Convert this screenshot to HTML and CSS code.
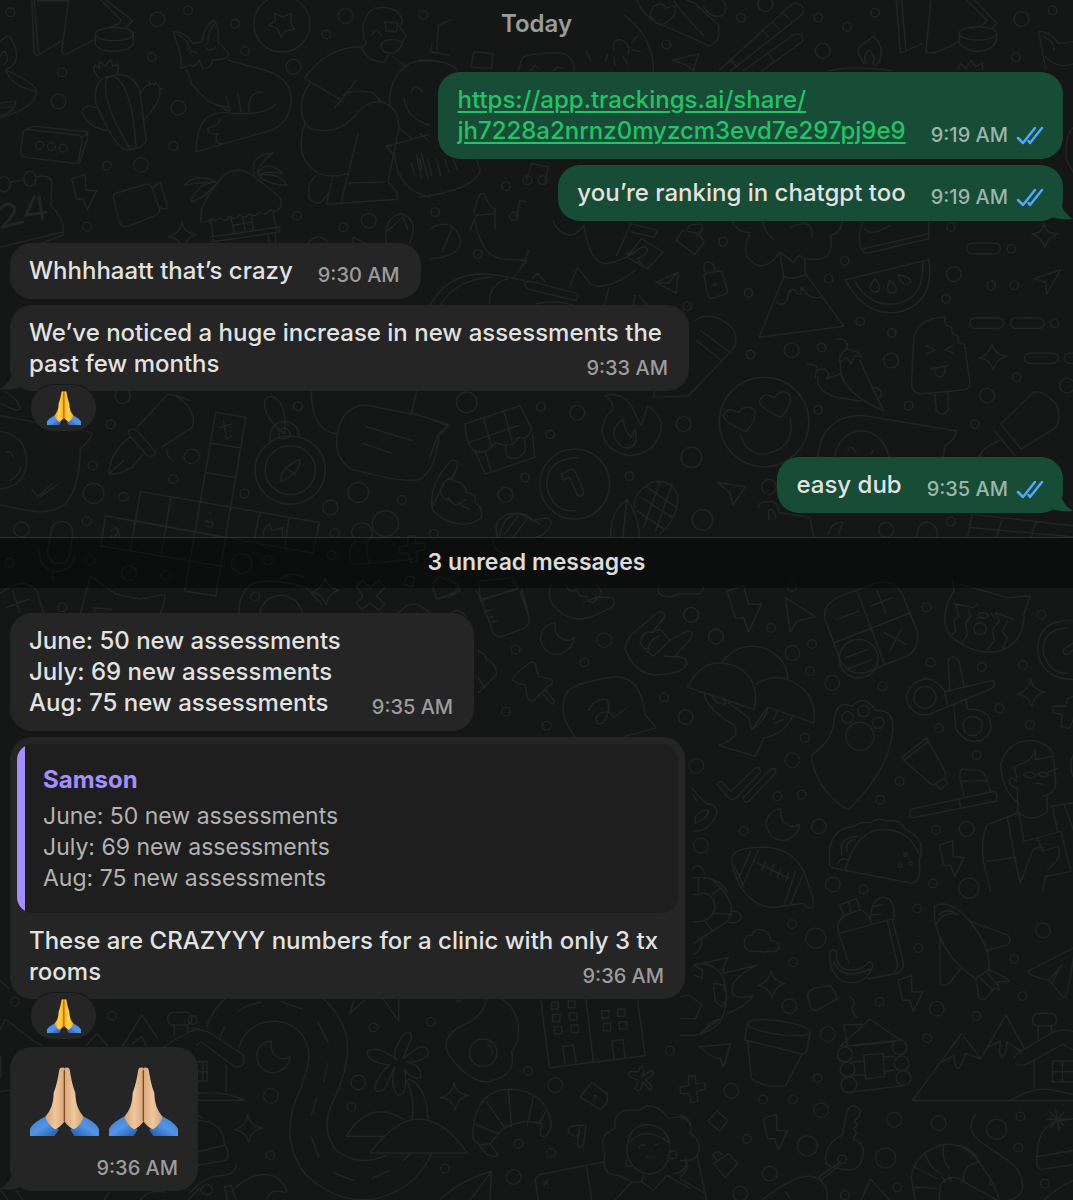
FILE: index.html
```html
<!DOCTYPE html>
<html lang="en">
<head>
<meta charset="utf-8">
<meta name="viewport" content="width=device-width, initial-scale=1">
<title>Chat</title>
<link rel="stylesheet" href="styles.css">
</head>
<body>

<!-- shared icons -->
<svg class="defs" aria-hidden="true">
	<symbol id="ticks" viewBox="0 0 28 20">
		<path d="M2 12L7 17L19 2M12.500 15L14 17L26 2" fill="none" stroke="currentColor" stroke-width="2.500" stroke-linecap="round" stroke-linejoin="round"/>
	</symbol>
	<linearGradient id="cuff" x1="0" y1="0" x2="1" y2="1">
		<stop offset="0" stop-color="#3b7bd0"/><stop offset=".5" stop-color="#5494e6"/><stop offset="1" stop-color="#1d58a8"/>
	</linearGradient>
	<linearGradient id="skin">
		<stop offset="0" stop-color="#d3a077"/><stop offset=".5" stop-color="#efc79d"/><stop offset="1" stop-color="#d9a77b"/>
	</linearGradient>
	<linearGradient id="gold">
		<stop offset="0" stop-color="#f5a623"/><stop offset=".5" stop-color="#ffd54a"/><stop offset="1" stop-color="#f7a91f"/>
	</linearGradient>
	<symbol id="pray" viewBox="0 0 207 207">
		<g id="half">
			<path d="M0 207V186C8 170 30 156 50 148L86 188C80 198 76 203 74 207Z" fill="url(#cuff)"/>
			<path d="M46 149C64 128 70 108 71 78C80 54 84 32 88 8C90 0 103 0 104 6V162C98 172 88 182 76 187C64 182 50 164 46 149Z"/>
			<path d="M104 10V162" fill="none" stroke="#7d4a20" stroke-width="4"/>
		</g>
		<use href="#half" transform="matrix(-1 0 0 1 207 0)"/>
	</symbol>
</svg>

<!-- wallpaper -->
<svg class="wallpaper" viewBox="0 0 1073 1200" preserveAspectRatio="xMidYMin slice" aria-hidden="true">
	<defs>
		<marker id="r1" class="ring" markerUnits="userSpaceOnUse"><circle r="13"/></marker>
		<marker id="r2" class="ring" markerUnits="userSpaceOnUse"><circle r="22"/></marker>
		<marker id="r3" class="ring" markerUnits="userSpaceOnUse"><circle r="30"/></marker>
		<marker id="e1" class="ring" markerUnits="userSpaceOnUse"><ellipse rx="10" ry="13"/></marker>
		<marker id="e2" class="ring" markerUnits="userSpaceOnUse"><ellipse rx="18" ry="22"/></marker>
		<marker id="e3" class="ring" markerUnits="userSpaceOnUse"><ellipse rx="25" ry="31"/></marker>
		<path id="bolt" d="M0 14L40 0L42 48L74 50L46 107L34 74L14 74Z"/>
		<path id="star" d="M40 0Q45 32 82 38Q50 45 43 82Q34 48 0 44Q34 34 40 0Z"/>
		<path id="moon" d="M42 0C4 4-14 40 6 72C30 112 92 96 98 46C72 64 34 44 42 0Z"/>
		<path id="plus" d="M20 0L40 0L42 24L68 20L70 40L44 46L48 74L28 80L22 52L-4 52L-6 34L20 28Z"/>
	</defs>

	<g transform="scale(.3333)">
		<polyline class="s" points="34,37 566,31 707,71 457,171 189,217 737,153 981,103 522,437 323,496 263,679 892,646 1031,681 1270,45"/>
		<polyline class="m" points="474,58 1038,48 882,200 178,304 537,323 425,494 1107,661"/>
		<!-- tent, pot, candle -->
		<path d="M98 0L105 160Q112 170 122 162L188 122M105 0L118 160M208 0L188 152Q190 165 205 160L288 118M115 2H208M305 0L365 60Q360 75 330 82M320 0L400 62L380 82M288 102V132Q300 155 345 153Q400 152 402 125V100"/>
		<ellipse cx="345" cy="102" rx="57" ry="20"/>
		<path d="M0 128Q20 105 32 108Q55 145 52 175Q45 200 20 208M0 175Q15 140 22 165Q30 190 10 195M20 210Q100 245 112 270Q112 325 0 352M20 212Q40 260 110 273M0 310L50 302Q48 340 0 345M0 322L38 320"/>
		<!-- cactus -->
		<path d="M300 235Q275 205 288 195L300 205V185L318 198L335 178L340 198L355 192Q360 215 350 225M375 448Q340 430 290 310Q280 240 330 228Q400 210 422 275L440 420Q430 450 375 448ZM392 445Q320 330 318 260Q318 225 345 228Q400 260 410 440M425 278Q440 245 475 252Q500 290 435 358M290 322Q255 310 248 335Q265 385 332 392M450 240V250M470 245L465 255M490 265L480 268"/>
		<!-- fox -->
		<path d="M545 170L522 95Q560 95 580 130L608 125Q615 75 645 60Q662 90 655 125L688 160L680 175L640 180Q635 205 610 205L600 180Q585 205 570 195L545 205ZM535 105Q565 115 570 148M625 130Q625 95 645 72M570 160Q580 148 592 160M622 145Q630 158 648 142M560 210Q570 220 575 250L590 265Q630 320 690 320M685 180L800 212Q875 235 875 300Q870 365 820 388L590 455Q590 385 620 355Q650 330 700 340Q800 345 828 312M790 275Q740 275 750 338M680 288L692 330M715 280L725 335M660 355Q670 370 625 385Q625 405 655 400Q640 430 670 430M665 320L690 335"/>
		<circle cx="847" cy="72" r="84"/>
		<path d="M825 40L848 50L876 40L873 68L885 88L858 92L845 112L834 85L807 75L828 62Z"/>
		<!-- man on a stool -->
		<path d="M1100 130Q1080 90 1098 55Q1110 20 1150 22Q1200 25 1208 65L1200 80L1220 108L1208 125Q1200 160 1170 160Q1140 155 1145 130Q1170 110 1205 125M1155 65L1195 70L1190 95L1160 92ZM1115 105L1130 88L1145 105M1100 130L1085 145Q1110 190 1155 185L1165 165M1085 140Q980 140 915 235L1025 300L1070 240M930 250Q880 330 930 385Q1020 410 1075 335Q1110 300 1145 305Q1195 320 1198 380L1165 545L1190 575L1195 597L980 612L1000 530M915 370Q880 480 960 520Q1000 535 1045 520M1075 400L1025 605M1045 548L1155 545M950 525Q920 550 930 595Q945 615 965 605L985 580M1025 300L1005 322M1030 285Q1060 265 1120 278L1145 305M1180 170L1220 200M1170 320Q1165 230 1230 190Q1260 178 1290 182M1200 385L1235 415M1213 295Q1220 355 1290 375M1235 275Q1245 245 1268 275"/>
		<!-- voice bubble -->
		<path d="M1160 438L1290 402M1160 438L1185 468Q1195 570 1290 590M1235 490L1245 525M1250 465L1265 530M1265 460L1285 535"/>
		<!-- cassette, calendar, camera, bolt -->
		<path d="M85 388L240 405Q250 410 248 425L238 480Q235 492 220 488L80 472Q62 468 65 450L72 400Q72 388 85 388ZM85 385L105 378L265 395V415L240 490M250 410L265 400"/>
		<circle cx="121" cy="435" r="12"/><circle cx="157" cy="439" r="12"/><circle cx="192" cy="444" r="12"/>
		<path d="M35 545L75 538M110 530Q150 520 158 545L155 615Q200 660 190 705L80 745M5 740L190 695"/>
		<ellipse cx="15" cy="552" rx="18" ry="23"/><ellipse cx="92" cy="535" rx="18" ry="23"/>
		<path class="bold" d="M5 625Q25 600 45 620Q55 635 10 680L70 665M105 590L80 645L140 635M120 590L130 655"/>
		<use href="#bolt" x="218" y="522"/>
		<path d="M342 590Q340 582 352 578L440 552Q452 550 458 560L480 625Q482 640 470 645L385 678Q365 682 360 665ZM460 562L482 545L505 620Q502 632 480 620"/>
		<use href="#star" x="508" y="665"/>
		<!-- beach hut -->
		<path d="M605 665Q595 620 660 540Q690 500 735 512Q770 530 840 590Q850 610 840 625Q825 640 810 628Q800 650 780 635Q765 655 750 640Q735 660 720 642Q705 665 690 648Q680 670 660 652Q650 665 635 655Q625 665 605 665ZM635 660L642 725M820 630L832 690M632 710L840 680V695L635 725M695 655L705 700M730 650L738 695M755 645L762 690M700 675L760 665M650 545Q590 515 555 555Q610 545 650 545Q590 550 575 605Q620 590 645 555M765 525Q745 465 820 458Q770 500 775 520Q800 475 850 520Q800 510 775 525Q840 515 862 555Q810 555 780 530M805 700L808 728M828 700V728M925 728Q960 690 985 728M1060 728V710L1095 728M1160 728Q1150 650 1205 640Q1260 660 1230 728M1165 690L1210 650L1225 690"/>
	</g>

	<g transform="translate(420 0) scale(.4165 .3333)">
		<polyline class="s wide" points="770,53 955,52 1091,38 1024,80 1517,31 591,133 1429,171 207,557 37,635"/>
		<polyline class="m wide" points="828,12 966,152 1442,57"/>
		<!-- bracelet, chopsticks, candle, sun -->
		<path d="M520 0Q530 40 570 70Q620 95 695 138Q725 120 715 75L660 10L640 0M575 75Q540 50 560 20Q580 0 590 25Q620 5 610 45Q600 65 575 75ZM610 5Q650 70 680 105M680 20Q700 60 728 45Q740 20 725 0M718 210L885 20Q900 0 915 18Q925 35 910 50L745 212M745 180L760 200M820 90L835 110M845 65L860 85M870 40L885 55M775 212L895 105Q915 95 918 118Q915 130 905 135L820 212M835 160L848 180"/>
		<path d="M1065 190Q1040 150 1060 135L1088 108Q1110 140 1105 165Q1105 190 1090 195M1070 190Q1060 165 1078 150Q1095 175 1085 190M980 212Q1040 195 1130 212M1142 0L1152 160L1205 130M1155 0L1165 150M1225 0L1213 155Q1230 170 1290 125M1310 0L1360 60Q1350 80 1320 85M1330 0L1383 70L1370 85M1293 105V130Q1310 155 1340 153Q1385 150 1383 100"/>
		<ellipse cx="1338" cy="100" rx="45" ry="20"/>
		<path d="M1290 212L1295 190L1310 205L1322 180L1332 200L1348 190L1350 212M1500 205L1483 95Q1510 90 1530 130L1568 125M1495 110Q1520 120 1520 150M1500 170Q1530 210 1568 190"/>
		<path d="M490 45Q560 110 560 212M465 150Q460 120 480 118Q505 130 500 160M450 165L445 185M465 172L468 195M488 170L498 192M510 150L528 155M508 130L520 110"/>
		<path d="M605 180L668 162L655 212L640 195ZM130 155L175 160L172 205L122 200ZM235 212L245 175Q255 160 330 158Q370 160 370 212M265 212L275 195L285 205M320 212L330 200L345 205M0 180Q70 180 90 212M400 155L410 180M30 130L25 155L70 165M45 75L75 60M45 75L40 150"/>
		<!-- voice bubble, notes, finger -->
		<path d="M0 590Q130 570 145 510L135 475M0 475L5 510M20 478L28 525M40 478L50 525M60 478L70 515M80 478L90 510M255 545L268 490L308 500L300 545M232 650L240 600L255 605M130 640Q140 570 155 580Q165 620 180 625V690M120 690L135 645L180 640"/>
		<ellipse cx="258" cy="540" rx="11" ry="13"/><ellipse cx="295" cy="540" rx="11" ry="13"/><ellipse cx="226" cy="648" rx="10" ry="13"/>
		<path d="M1568 380Q1545 400 1550 480L1568 520M0 400L20 420"/>
	</g>

	<g transform="translate(430 210) scale(.41 .3333)">
		<polyline class="s wide" points="714,94 117,131 776,247 1010,151 971,205 1269,50 1416,115 1367,225 1423,224 1257,265 1048,332 1125,367 1521,338 627,287 781,432 954,411 1166,585 946,597 1429,500 270,588 293,671 232,800 486,796 1327,641 1269,932"/>
		<polyline class="m wide" points="1276,191 881,419 1123,450 359,606 618,640 184,852 826,828 1111,957 1357,555 1552,525"/>
		<polyline class="l wide" points="90,575 637,740 664,927"/>
		<!-- dancer -->
		<path d="M110 32Q125 130 170 145L235 150L205 200M240 120L230 160M300 32Q310 70 345 75Q370 60 375 45Q390 160 430 160Q470 150 500 125L480 130M455 135L490 40L555 60L545 80L490 65M515 85L568 125L530 175L480 140ZM495 130Q520 100 530 115Q530 135 505 145L520 165M500 180Q430 245 390 220L360 170L340 230M435 235L425 285M0 145Q70 140 75 95Q70 50 40 42Q10 40 0 60M55 50L30 125M0 285Q50 170 170 195L230 210M25 285Q60 210 150 200M145 280Q145 220 190 205M232 215Q230 235 245 238L355 270Q365 255 355 248L245 212ZM250 205L262 188L280 212M500 255L495 285M510 255L528 285M260 280Q310 265 350 285"/>
		<!-- bottle, play, padlock -->
		<path d="M615 60L600 90L645 132L668 95L655 70ZM625 60L632 45L660 40L665 55L650 75M605 185L550 215L600 248ZM550 215L580 218L600 190M668 200Q665 190 680 186L710 182L725 240Q725 250 715 253L685 265Q678 262 676 250ZM672 190Q660 155 680 155Q695 160 695 185"/>
		<circle cx="694" cy="222" r="4"/>
		<!-- volcano -->
		<path d="M735 32Q750 70 780 65Q750 140 800 165Q830 170 852 125L862 198L802 380L1008 347L915 190L912 145L900 135L885 155L852 125M915 145Q990 160 975 75Q1000 70 1005 32M810 32Q815 65 835 85M880 50Q935 20 930 80M862 198Q885 210 915 192M845 275Q855 290 870 270Q875 225 890 240Q905 270 905 230Q925 270 950 260"/>
		<!-- slices -->
		<path d="M1055 32Q1035 100 1060 130L1215 85V32M1055 115L1215 70M1060 55Q1075 80 1120 45M1012 208L1215 148Q1230 280 1140 305Q1060 320 1012 208ZM1035 212Q1070 290 1135 280Q1205 265 1200 158"/>
		<path d="M1085 205Q1060 235 1085 245Q1105 240 1085 205ZM1120 210Q1105 250 1130 248Q1145 235 1120 210ZM1140 192Q1145 225 1165 222Q1185 205 1140 192Z"/>
		<!-- sparkles and dashes -->
		<path d="M1495 40Q1500 72 1530 70Q1502 82 1498 112Q1490 82 1466 70Q1492 70 1495 40ZM1368 400Q1373 430 1404 438Q1378 445 1372 478Q1365 445 1338 442Q1365 430 1368 400ZM1472 205L1536 178L1502 250L1500 215Z"/>
		<rect x="1307" y="98" width="82" height="32" rx="15"/><rect x="1315" y="322" width="82" height="32" rx="15"/><rect x="1414" y="322" width="82" height="32" rx="15"/><rect x="1448" y="427" width="82" height="32" rx="15"/><rect x="1545" y="427" width="60" height="32" rx="15"/>
		<!-- ice lolly -->
		<path d="M1173 520L1178 390Q1185 320 1255 320Q1248 345 1270 350Q1270 375 1285 375Q1285 405 1302 400L1315 515Q1315 535 1300 538L1195 550Q1172 545 1173 520ZM1230 552L1233 600Q1248 620 1262 598V545M1208 405L1230 418L1210 430M1272 405L1255 418L1275 428M1220 475L1262 465M1228 475Q1230 500 1245 500Q1255 495 1255 468"/>
		<!-- chillies -->
		<path d="M990 385Q1020 380 1015 415M1015 415Q990 440 1000 455L1015 440L1025 460L1035 435L1052 440Q1045 420 1015 415ZM1000 455Q990 540 1105 600Q1080 540 1048 450M920 462Q945 460 945 480M940 500Q935 475 960 475Q980 490 965 505M945 500Q940 540 990 560L1050 572M965 505L1000 490M1075 530Q1100 530 1100 555L1090 565"/>
		<!-- heart eyes face -->
		<ellipse cx="814" cy="634" rx="109" ry="134"/>
		<path d="M770 662Q715 635 716 615Q725 585 752 605Q770 575 792 600Q795 630 770 662ZM855 620Q800 590 803 570Q815 540 838 562Q860 530 878 555Q880 590 855 620ZM757 675Q770 730 815 730Q890 715 878 625"/>
		<!-- flame -->
		<path d="M485 735Q420 720 420 655Q425 610 445 600Q450 570 425 555Q480 540 500 610L515 645L530 585Q575 625 560 670Q545 730 485 735ZM470 710Q425 665 470 625Q475 660 490 680L500 655Q510 720 470 710Z"/>
		<!-- pencil, gift -->
		<path d="M645 330Q685 295 735 350Q755 385 735 420L630 555L545 560L548 540M650 390L710 450M660 360L730 425M85 640L220 585L248 655Q240 690 215 680Q200 720 160 695Q140 735 110 720Q90 710 85 640ZM95 695L215 645M130 620L150 705M180 600L200 690M110 722L135 790L255 740L250 670M135 722L150 785M185 700Q180 755 215 740Q240 725 230 690M0 625L45 645L20 670L0 740"/>
		<!-- coin -->
		<ellipse cx="353" cy="820" rx="85" ry="105"/>
		<path d="M360 740Q280 745 285 830Q300 905 355 900M320 790L345 775Q355 775 375 845Q370 860 360 855L340 800L325 808Z"/>
		<!-- hand, corn -->
		<path d="M5 890Q0 820 45 760Q55 740 68 755Q65 790 50 805M25 840Q40 790 60 810Q90 820 88 845Q115 845 110 875Q130 890 125 920Q100 950 55 935Q15 920 5 890ZM25 840Q30 870 50 865M45 860Q60 890 70 880L88 865M75 880Q90 895 100 895M440 978Q440 900 480 865Q510 920 510 978M480 865L470 978M500 890Q490 850 540 815Q590 800 605 860Q600 930 560 970M515 860L590 920M530 830L600 890M505 900L570 955M560 815L520 950M590 820L550 960M165 978Q150 930 190 910Q240 900 250 930Q300 910 295 940Q280 978 260 978"/>
		<!-- arrow, ghost bubble, brush, lock -->
		<path d="M700 815L768 828L738 882L730 845ZM945 738Q955 610 1060 615L1280 660Q1285 680 1255 705L1250 738M985 738Q1000 660 1055 660Q1105 670 1118 738M1018 722Q1025 695 1038 725M1075 730L1080 718M1340 738Q1340 715 1385 690M1375 660L1425 735M1390 640L1470 545Q1490 535 1525 580Q1540 620 1525 650L1440 715ZM800 890Q800 870 830 872Q850 875 850 905L925 920L935 978M825 925V900Q835 885 842 920M1185 978Q1190 930 1215 935Q1240 945 1235 978M970 970Q980 930 1005 935L995 970M1310 978L1320 910L1568 945M1380 978L1395 920M1465 978L1475 935M1315 950L1568 978"/>
	</g>

	<g transform="translate(0 380) scale(.3444 .3333)">
		<polyline class="s" points="866,77 323,131 271,255 505,295 711,338 361,348 254,421 1167,357 973,457 1260,459 183,679 742,647 30,545 265,540 482,583 780,538 964,523"/>
		<polyline class="m" points="558,227 65,446 960,380 376,577 358,46"/>
		<polyline class="l" points="274,338 1041,335 1052,456 703,548"/>
		<circle cx="1120" cy="428" r="38"/>
		<!-- ghost bubble -->
		<path d="M0 105L268 155Q275 165 235 205Q235 320 190 370Q150 400 90 390L0 372M0 152Q75 160 80 240Q75 320 0 325M20 215Q35 205 40 230M30 300Q60 285 62 260M95 325L112 347L155 308M120 347L172 310M20 33Q60 60 60 85Q50 95 0 65"/>
		<!-- pen -->
		<path d="M400 140L485 45Q510 30 550 80Q570 110 560 140L470 200M515 45L555 60M375 150Q385 140 400 150L455 215Q450 230 430 225L378 165ZM378 170Q325 210 318 275Q330 290 385 260L418 220M320 278L362 238M485 205Q485 230 505 240"/>
		<!-- crossword -->
		<path d="M628 95L715 110L628 645L538 630ZM410 332L928 425L910 517L395 420M308 405L652 470M295 495L640 555M308 405L295 495M410 332L380 508M498 350L470 525M755 397L738 485M840 412L828 500M612 187L700 202M597 275L683 290"/>
		<path d="M650 120L660 175L675 165M640 140L675 130M612 395V397M598 420L620 425Q620 445 600 435M325 450Q340 430 345 450Q335 480 325 465M345 450L350 470M765 470Q765 435 785 430L790 450L820 440L822 468"/>
		<!-- compass -->
		<circle cx="844" cy="268" r="102"/><circle cx="844" cy="268" r="73"/><circle cx="827" cy="159" r="16"/>
		<path d="M785 185Q780 125 830 122Q870 130 870 170M825 158Q765 110 770 60Q785 35 810 60Q835 90 827 158M872 235Q875 275 818 302Q810 265 872 235ZM830 260L860 282"/>
		<!-- chat bubble -->
		<path d="M1195 97L1300 130Q1305 140 1275 165Q1265 270 1220 295Q1180 310 1020 265Q970 230 980 165Q990 80 1060 72L1195 100M1065 138L1198 180M1053 188L1137 217M905 33Q905 150 980 160M1210 33L1195 100"/>
		<!-- hand, lower left of the gift -->
		<path d="M1432 470Q1430 520 1480 520M1450 470Q1460 400 1510 398L1568 430M1465 460L1505 405M1490 470L1530 415"/>
		<!-- mic, bottle, plaster -->
		<path d="M150 455Q155 420 188 422Q215 430 213 460L205 520Q195 555 160 545Q135 530 142 500ZM115 510Q120 565 165 572Q210 570 222 525M155 575V600M1018 510Q1015 480 1070 475L1160 468M1018 510Q1010 555 1040 550L1200 535M1070 480Q1060 520 1075 545"/>
		<use href="#plus" x="1165" y="465"/>
		<path d="M0 640Q70 580 110 630L130 700M20 680L85 655M40 630L60 695M235 700L250 640L265 585L340 640L410 655L480 640Q485 660 465 700M270 680L325 685M280 680L275 700M695 700Q695 610 760 600Q840 600 890 620L935 670M755 700Q765 645 820 643Q870 650 880 700M820 590Q850 570 885 590"/>
		<use href="#star" x="905" y="590"/>
		<path d="M1035 615L1055 600L1075 620L1100 600L1118 620L1095 645L1118 670L1100 688L1075 665L1052 685L1035 668L1055 645ZM1185 585L1205 590L1198 618L1172 610ZM1275 585L1330 610L1320 640L1268 655L1255 610ZM1155 700Q1200 640 1250 700M1390 600L1490 590L1505 620L1395 660ZM1400 660L1410 700M1515 625L1535 700"/>
	</g>

	<g transform="translate(440 580) scale(.3333)">
		<polyline class="s" points="227,205 433,244 198,391 320,434 672,349"/>
		<polyline class="m" points="492,177 752,101 827,167 736,407"/>
		<path d="M110 30L125 55L235 25L215 0M125 60L160 155Q170 170 190 165L255 140Q270 130 268 110L240 30M135 92L158 85M145 110L160 107M150 125L170 120M30 97Q60 75 80 110M115 210Q135 215 140 235Q170 245 170 280L115 335M115 290L135 320M0 50L60 30L55 10"/>
		<use href="#moon" x="304" y="125"/>
		<path d="M335 10Q310 60 370 100Q415 125 460 105L515 80Q530 60 515 50L470 48L430 65M375 10Q390 40 410 25Q420 55 440 45Q440 65 460 65M470 10L485 35L460 65M655 25Q650 45 690 48L715 40L780 38L790 20"/>
		<!-- pushpin -->
		<path d="M218 295Q215 285 270 245Q285 238 288 258L295 285L335 295Q345 305 325 315L280 360Q265 362 262 345L255 310Q230 310 218 295ZM305 335L335 368Q345 370 342 358L315 325"/>
		<!-- rock hand, bubble -->
		<path d="M555 205Q555 170 600 140L650 95Q675 85 672 110L635 155L660 145Q680 165 688 178L740 150Q765 150 750 175L705 225Q740 230 740 245Q735 275 660 280Q590 290 555 205ZM600 185Q610 145 635 155M625 205Q625 175 660 165M640 225L690 178M670 225L705 228M600 185L615 205L625 200M620 210L640 225M405 467Q350 400 380 335Q400 305 520 288Q600 280 615 400L648 440L555 465M445 388Q465 350 500 355Q515 385 490 425Q465 435 468 410Q475 390 510 392L520 410L560 380"/>
	</g>

	<g transform="translate(680 580) scale(.3333)">
		<polyline class="s" points="335,17 272,141 395,189 389,270 606,316 373,470 291,645 364,640 190,748 738,79 1082,101 750,244 903,258 1026,252 956,381 1047,431 775,441 888,521 657,600 599,655 766,745 549,924 757,906"/>
		<polyline class="m" points="33,102 107,166 336,216 455,305 336,537 415,735 62,793 858,743 457,909 17,408 48,554"/>
		<polyline class="l" points="865,920"/>
		<path d="M140 30L190 15L205 70L243 70L205 153L190 110L165 112ZM315 50L405 107L350 120L330 153Z"/>
		<!-- calculator -->
		<path d="M432 110Q430 70 470 50L580 8Q640-10 665 40L708 145Q720 200 680 225L590 260Q520 300 480 240ZM530 30L612 250M462 185L690 95M468 115L535 90M590 30L615 95M570 75L635 50M612 155L678 190M662 145L630 205M495 230L562 205M505 262L575 235"/>
		<circle cx="534" cy="233" r="58"/>
		<!-- mushrooms -->
		<path d="M22 318Q70 220 165 255Q240 290 222 385L70 335ZM125 245Q170 180 250 200Q320 230 322 292M228 308Q290 270 350 310Q410 350 400 425L262 378L215 445L205 410L145 365M72 340Q85 390 160 430Q185 470 115 492L225 525Q240 500 250 470Q310 460 335 408M95 345L110 365L135 370L132 350M262 380Q255 420 215 445M280 415L290 390M285 425L310 415"/>
		<!-- cat bubble -->
		<path d="M815 0L820 30Q770 110 810 165Q870 220 950 212Q1030 190 1030 100L1048 45L980 50L840 10M820 68L880 80L890 70M825 70L835 105L820 120L825 150L815 160M862 85L870 105L855 125L860 160L845 185M930 95L942 110M998 115L945 95L955 120L935 145L940 180L920 205M980 120L965 150L980 170L965 205"/>
		<circle cx="898" cy="143" r="18"/><ellipse cx="907" cy="103" rx="15" ry="8"/>
		<path d="M1179 120Q1075 110 1070 205Q1080 295 1179 295M1160 140Q1085 145 1087 210Q1100 275 1160 277M1179 185L1148 205Q1145 220 1160 220L1179 205"/>
		<!-- scissors -->
		<circle cx="733" cy="349" r="33"/><circle cx="876" cy="434" r="29"/>
		<path d="M792 330Q750 270 700 308Q655 350 700 390Q720 405 745 400L925 325Q950 315 938 297L792 332L800 370M808 328L802 240Q815 215 835 240L850 315M820 375L825 440Q850 490 900 478Q950 450 920 400Q890 380 862 385L855 355"/>
		<use href="#star" x="1010" y="295"/>
		<path d="M1179 345L1160 352L1155 375L1118 375L1115 395L1145 400L1140 435L1165 442L1179 410"/>
		<!-- paw -->
		<circle cx="538" cy="465" r="42"/><circle cx="501" cy="409" r="17"/><circle cx="549" cy="390" r="17"/><circle cx="593" cy="425" r="17"/>
		<path d="M393 522Q460 475 462 410Q470 355 515 375Q550 335 585 388Q640 385 637 440Q630 560 510 680Q500 688 485 675Q400 610 393 522Z"/>
		<!-- tube, toothbrush, ticks -->
		<path d="M662 530L738 470L795 575L792 590L755 612L662 530ZM672 535L742 482M765 607L780 625L802 605L792 592M692 710L945 660Q955 640 940 630L695 683Q680 695 692 710ZM850 642L838 590Q835 565 850 562L865 568Q905 560 915 585L930 630M845 600L915 598M835 655L840 675M110 608Q120 595 130 608L152 630L225 560Q240 555 240 572L165 652Q155 660 145 650ZM188 650L270 565Q290 555 285 575L205 660Q190 665 188 650Z"/>
		<use href="#moon" x="260" y="682"/>
		<!-- taco, bolt -->
		<path d="M448 850Q435 740 525 735Q530 720 570 725Q590 705 620 720Q660 710 675 745Q740 770 715 840Q725 905 690 905L470 862Q448 858 448 850ZM495 865Q530 735 620 745Q690 750 715 820M470 850Q480 825 500 835M485 820Q470 770 530 765M500 810Q495 775 525 775"/>
		<circle cx="674" cy="820" r="5"/><circle cx="659" cy="853" r="5"/><circle cx="691" cy="846" r="5"/>
		<use href="#bolt" x="776" y="778"/>
		<!-- football -->
		<path d="M155 830Q160 800 230 798Q330 790 370 870L395 940Q410 1000 370 970M155 830Q150 850 180 915Q230 990 300 975L370 965M162 850L185 905M210 810L175 890M235 805L185 915M345 870L312 970M365 885L330 970M232 845L325 890M255 840L245 865M280 850L270 880M302 862L290 890M325 875L315 900"/>
		<!-- person reading -->
		<path d="M1015 670Q960 620 960 550Q980 475 1060 478Q1110 490 1118 525L1065 535L1062 505Q1060 540 1000 555L1008 590M1118 530L1125 610Q1120 640 1085 645M1008 600Q990 580 985 600Q990 620 1010 620V690Q1050 730 1100 690L1098 645M1028 580Q1045 565 1065 580Q1050 600 1028 580ZM1070 578Q1090 565 1102 580Q1090 595 1070 578ZM1102 572L1130 562M1065 605L1085 608M1010 695L920 730Q900 770 908 840L930 930M915 840L1005 828M980 710L1000 820L1018 905L1050 820Q1060 790 1090 800M1015 700L1030 780L1140 750L1170 870L1095 885L1085 930M1110 675L1179 665M1115 675L1130 750M1150 670L1179 750M1070 770L1085 810L1130 795Q1150 830 1100 865M1179 520Q1160 550 1179 590"/>
		<path d="M35 620L75 665Q110 670 110 695Q90 750 40 750M38 640L50 660M45 725Q40 690 85 685Q85 710 45 725ZM38 860Q60 840 75 880M38 890Q110 880 140 930M55 890V930"/>
	</g>

	<g transform="translate(680 880) scale(.3333)">
		<polyline class="s" points="335,128 338,242 710,81 714,199 597,360 740,470 411,589 248,653 338,653 200,771 887,403 1000,232 1026,343 1019,704 1013,797 1092,905 650,916 493,940"/>
		<polyline class="m" points="327,374 442,457 153,627 422,685 641,714 774,724 768,381 268,875 1087,146 180,935"/>
		<polyline class="l" points="406,170 381,792 615,828 948,742"/>
		<!-- turtle, football on fire -->
		<path d="M100 0Q150 40 155 90L140 120L40 185M40 40Q100 20 105 80Q90 125 40 120M95 40L120 20M105 95L155 100M75 120L95 145M150 90Q180 85 183 110Q170 130 145 122M65 170Q65 210 40 218M40 250L145 228Q125 250 130 275L232 250Q150 290 155 330Q160 355 218 343Q190 380 140 395M40 250Q100 235 130 290Q150 360 120 420Q70 470 0 460M100 305L130 310L140 350L125 375L105 360ZM0 345L25 340L65 368L45 412L0 410M40 250L68 268L65 290L42 280M60 455L118 412L95 420Z"/>
		<path d="M192 190Q190 160 215 160Q225 135 255 148Q270 155 270 178Q295 175 297 200Q285 215 265 208Q250 215 235 208Q195 215 192 190Z"/>
		<use href="#star" x="232" y="268"/>
		<!-- bottle and bread, banana -->
		<path d="M475 155Q465 120 490 105L478 70L528 52L538 85Q570 95 572 130M505 62L512 90M485 105L538 85M478 155L635 112L668 240Q672 265 650 275L560 292M475 155L505 245M620 118L650 245Q655 260 640 272M570 120Q570 60 600 48Q640 40 640 100L640 115M580 75L605 70M575 100L600 98M448 210Q455 200 468 210Q465 270 520 265Q550 260 568 240Q580 245 575 260Q550 315 490 300Q445 280 448 210ZM460 240Q480 300 570 262"/>
		<path d="M382 345Q380 330 395 325L400 320L450 312Q470 345 470 352L410 385Q395 388 390 375ZM508 345Q530 360 515 375Q515 395 530 408"/>
		<use href="#bolt" x="652" y="282"/>
		<!-- rocket -->
		<path d="M762 75Q800 50 860 110Q930 190 925 265L885 290Q790 230 762 120ZM765 130Q790 85 835 100M775 100Q800 75 830 100M870 120L980 160Q995 175 980 190L920 205M778 165V300Q785 320 805 305L840 262M885 290L895 350Q910 360 920 345L940 320L955 325L950 300L985 300Q985 290 925 265M900 290L935 325M920 275L950 310"/>
		<path d="M1179 198L1040 270Q1040 280 1105 297L1150 350Q1160 350 1179 220M1105 297L1142 250L1115 300"/>
		<!-- plant pot, arrow, plus -->
		<ellipse cx="295" cy="438" rx="95" ry="20" transform="rotate(8 295 438)"/>
		<path d="M202 420L193 475L365 517Q380 515 380 500L388 460M202 480L213 590Q250 620 315 612L365 518M58 495L150 487L130 555L118 530Q95 530 58 495Z"/>
		<use href="#plus" x="5" y="583"/>
		<!-- log cabin -->
		<path d="M478 495L568 412L660 475ZM500 490L490 430L545 428M550 520L608 515L612 585L555 592ZM515 540H550M515 580H555M610 525H640M615 570L640 565M520 492L640 480M500 632L670 612"/>
		<circle cx="493" cy="518" r="22"/><circle cx="501" cy="563" r="22"/><circle cx="505" cy="609" r="24"/><circle cx="657" cy="497" r="22"/><circle cx="663" cy="545" r="22"/><circle cx="669" cy="589" r="22"/>
		<!-- mountains and house -->
		<path d="M1179 657H695L843 455L900 532L975 400L1030 500M785 540L820 520Q820 560 835 560Q845 545 855 515L895 530M925 495L960 478Q950 520 965 525Q980 510 978 480L1022 510M1000 530Q995 520 1120 450Q1150 440 1179 450M1005 545Q1020 560 1060 535L1145 488L1179 505M1060 535V620M1072 470V435M1112 435V450M990 655Q1050 620 1100 622L1179 638M1179 538H1115V600H1179M1145 538V600M1115 570H1179"/>
		<rect x="1055" y="395" width="72" height="38" rx="18"/>
		<!-- gems, key, shrimp, hat, cone -->
		<path d="M82 718L110 688L143 715L118 748ZM98 820Q110 800 125 818M98 820L110 835M100 845L145 815L172 845L135 887ZM0 700Q40 710 30 755Q70 780 50 820L80 960M15 830Q30 860 0 885M0 835Q40 840 52 820M0 890L75 935"/>
		<use href="#bolt" x="248" y="697"/>
		<circle cx="485" cy="832" r="13"/>
		<path d="M435 840Q435 780 485 760L500 685Q515 660 540 685L535 705L522 715L530 730L520 740L528 755L518 770Q560 790 545 830Q535 870 495 862Q445 860 435 840ZM478 842L415 885L420 895L480 850M240 958Q350 870 400 885Q445 900 440 958M315 930L330 950M540 958L570 892L630 958"/>
		<path d="M885 698Q850 740 900 780L980 835Q1030 870 1025 920Q1010 965 950 955L850 900Q840 850 895 840L935 900L955 950M895 840Q850 780 790 788Q700 810 692 890L705 958M850 900Q830 880 800 890Q770 900 778 958M830 790Q880 800 895 840M790 790Q780 830 805 860M735 820Q750 860 780 875M700 855L770 890M695 915L770 920M785 885L795 900M805 882L812 898"/>
		<circle cx="932" cy="904" r="5"/>
		<path d="M1070 825Q1065 750 1120 720L1179 710M1065 825L1179 805M1068 828Q1065 865 1085 862L1179 848M1085 958Q1130 915 1179 895M1098 712L1160 712M1125 685L1135 745M1108 692L1150 732M1150 690L1110 735"/>
	</g>

	<g transform="translate(190 980) scale(.3333)">
		<polyline class="s" points="551,137 723,120 485,375 243,520 765,560 1015,267 1083,513 986,485 1439,207 10,115"/>
		<polyline class="m" points="506,302 244,342 1096,310 971,585"/>
		<!-- road -->
		<path d="M52 135Q70 80 115 45M400 50Q490 130 470 240Q460 300 425 370Q395 440 435 500Q500 560 590 520M148 198Q170 120 260 118Q350 130 358 220Q355 280 320 350Q270 480 350 580Q450 670 560 650Q680 620 725 515M148 88Q175 68 215 62M275 60L338 82M385 122L415 182M415 245L402 300M382 347L365 400M365 465L388 527M433 573L490 595M548 588L598 566M640 537L660 518M105 135L92 165"/>
		<use href="#moon" x="204" y="178"/>
		<path d="M22 190L35 180L135 255Q170 260 162 220L55 150L10 140M110 250V328M25 240H53V298H25M40 240V298M25 270H53M25 335Q100 325 165 355H25"/>
		<use href="#star" x="135" y="400"/>
		<path d="M25 400L40 410M25 415Q105 420 105 490L25 510M105 490Q125 510 110 535L25 550M0 635Q50 575 110 580Q140 570 140 550M35 620Q55 590 70 625Q60 650 35 630ZM105 615L125 610L140 655M105 615L115 655M135 620Q200 560 260 585Q300 620 288 632Q240 615 232 655M480 95L495 52M480 95L525 55M580 50L627 120V52"/>
		<!-- palm island -->
		<path d="M622 235Q600 220 640 160Q665 140 665 170L640 230L690 195Q720 195 715 220Q690 245 650 240Q695 250 693 285Q670 300 645 262Q655 340 625 340Q600 320 615 255L585 320Q560 340 555 315Q570 270 600 250Q530 240 533 210Q560 185 622 235ZM650 295Q675 340 668 410M655 290Q710 310 715 412M470 463Q540 350 640 412M470 463H580M540 513Q620 410 685 412Q760 410 832 513Z"/>
		<use href="#star" x="753" y="303"/>
		<!-- fried egg -->
		<circle cx="880" cy="213" r="41"/>
		<path d="M890 52Q880 105 820 130Q740 170 785 230Q850 310 900 298Q980 285 965 210Q990 180 985 125Q970 70 935 52M895 190Q908 195 907 218"/>
		<!-- croissant -->
		<path d="M850 440Q860 325 960 322Q1070 325 1085 430Q1070 475 1050 460L1055 425Q1000 410 940 440L900 485L925 520Q895 535 865 485Q845 480 850 440ZM890 360L945 440M955 322L965 435M1030 345L1012 430M858 428L925 455M1070 385L1045 425M870 490L900 485"/>
		<!-- buildings -->
		<path d="M1052 52L1078 258L1365 222L1342 52M1188 52L1210 240M1125 245L1118 195L1150 190L1158 240M1272 230L1265 178L1298 173L1305 227"/>
		<path d="M1085 62h20v20h-20zM1135 58h20v20h-20zM1088 98h22v22h-22zM1138 93h22v22h-22zM1093 135h22v22h-22zM1143 130h22v22h-22zM1235 87h22v22h-22zM1283 82h22v22h-22zM1240 125h22v22h-22zM1288 120h22v22h-22z"/>
		<path d="M1170 345L1205 302L1250 335Q1260 365 1230 383ZM1345 270Q1355 240 1362 270L1355 285L1385 265Q1400 280 1365 295Q1395 315 1380 325L1358 300Q1350 340 1335 320L1345 295Q1305 285 1320 270ZM1188 432L1180 490Q1170 505 1162 490L1170 430H1188M1170 430Q1130 430 1135 450Q1150 470 1165 460"/>
		<circle cx="1216" cy="345" r="4"/>
		<!-- curly hair -->
		<path d="M1285 580Q1230 580 1245 515Q1220 460 1275 440Q1265 375 1350 385Q1390 350 1435 410Q1490 395 1500 430M1490 535Q1490 570 1450 575M1310 510Q1310 430 1375 428Q1435 435 1440 500Q1435 570 1380 577Q1320 570 1310 510ZM1320 480Q1365 430 1432 480M1310 530Q1300 560 1325 552M1440 510Q1470 500 1455 530L1440 530M1345 500Q1350 485 1365 490M1395 490L1405 485M1370 525L1395 525M1360 580L1355 600L1390 625L1430 580M1325 600L1275 655M1355 600L1325 600L1285 580M1430 580L1500 620M1045 655L1035 590L1050 578L1240 540M1190 552L1205 655M750 655Q800 600 905 568L900 655M905 568L840 655M1060 595L1075 608M1075 592L1062 610M800 55Q820 65 815 50"/>
	</g>

	<g transform="translate(0 970) scale(.3333)">
		<polyline class="s" points="47,90 338,132"/>
		<path d="M0 182L18 142L100 205L130 220M260 222L292 185L325 222M370 222L428 130L475 200M400 215L428 195L440 222M495 225Q560 180 600 170M525 190V160M565 160V185M0 25L30 50M0 360L30 355M5 255V315M50 655L75 690M0 650Q20 670 30 690M310 690L330 660M420 690Q440 650 500 660M560 690L600 650"/>
		<rect x="505" y="122" width="72" height="38" rx="18"/>
	</g>
</svg>

<main class="chat">
	<div class="day"><span>Today</span></div>

	<div class="row out">
		<div class="bubble">
			<p class="text"><a href="https://app.trackings.ai/share/jh7228a2nrnz0myzcm3evd7e297pj9e9">https://app.trackings.ai/share/<br>jh7228a2nrnz0myzcm3evd7e297pj9e9</a></p>
			<span class="meta"><time>9:19 AM</time><svg class="ticks" role="img" aria-label="Read"><use href="#ticks"/></svg></span>
		</div>
	</div>
	<div class="row out">
		<div class="bubble tail">
			<p class="text">you’re ranking in chatgpt too</p>
			<span class="meta"><time>9:19 AM</time><svg class="ticks" role="img" aria-label="Read"><use href="#ticks"/></svg></span>
		</div>
	</div>

	<div class="row turn">
		<div class="bubble">
			<p class="text">Whhhhaatt that’s crazy</p>
			<span class="meta"><time>9:30 AM</time></span>
		</div>
	</div>
	<div class="row">
		<div class="bubble tail stack">
			<p class="text">We’ve noticed a huge increase in new assessments the<br>past few months</p>
			<span class="meta"><time>9:33 AM</time></span>
		</div>
		<span class="reaction"><svg class="pray" role="img" aria-label="Folded hands"><use href="#pray"/></svg></span>
	</div>

	<div class="row out last">
		<div class="bubble tail">
			<p class="text">easy dub</p>
			<span class="meta"><time>9:35 AM</time><svg class="ticks" role="img" aria-label="Read"><use href="#ticks"/></svg></span>
		</div>
	</div>

	<h2 class="unread">3 unread messages</h2>

	<div class="row">
		<div class="bubble lines">
			<p class="text">June: 50 new assessments<br>July: 69 new assessments<br>Aug: 75 new assessments</p>
			<span class="meta"><time>9:35 AM</time></span>
		</div>
	</div>
	<div class="row">
		<div class="bubble stack quoted">
			<blockquote class="quote">
				<cite>Samson</cite>
				<p>June: 50 new assessments<br>July: 69 new assessments<br>Aug: 75 new assessments</p>
			</blockquote>
			<p class="text">These are CRAZYYY numbers for a clinic with only 3 tx<br>rooms</p>
			<span class="meta"><time>9:36 AM</time></span>
		</div>
		<span class="reaction"><svg class="pray" role="img" aria-label="Folded hands"><use href="#pray"/></svg></span>
	</div>
	<div class="row big">
		<div class="bubble tail emoji">
			<div class="hands">
				<svg class="pray light" role="img" aria-label="Folded hands"><use href="#pray"/></svg>
				<svg class="pray light" role="img" aria-label="Folded hands"><use href="#pray"/></svg>
			</div>
			<span class="meta"><time>9:36 AM</time></span>
		</div>
	</div>
</main>
</body>
</html>
```
FILE: styles.css
```css
*{box-sizing:border-box;margin:0;padding:0;}
body{position:relative;background:#151716;color:#e4e4e4;font-family:Inter,"Liberation Sans",sans-serif;font-size:24px;line-height:31px;}
.defs{position:absolute;width:0;height:0;}

/* wallpaper */
.wallpaper{position:absolute;left:0;top:0;z-index:-1;width:100%;height:100%;fill:none;stroke:#232424;stroke-width:1.5;stroke-linejoin:round;stroke-linecap:round;}
.wallpaper path,.wallpaper circle,.wallpaper ellipse,.wallpaper rect{vector-effect:non-scaling-stroke;}
.wallpaper polyline{stroke:none;}
.wallpaper .bold{stroke-width:3;}
.ring{overflow:visible;fill:none;stroke:#232424;stroke-width:4;}
.wallpaper .ring circle,.wallpaper .ring ellipse{vector-effect:none;}
.s{marker:url(#r1);}
.m{marker:url(#r2);}
.l{marker:url(#r3);}
.s.wide{marker:url(#e1);}
.m.wide{marker:url(#e2);}
.l.wide{marker:url(#e3);}

.chat{padding-bottom:5px;}
.day{display:flex;justify-content:center;margin-bottom:20px;color:#9b9b9b;font-weight:600;}
.day span{padding:8px 14px 13px;background:#151716;border-radius:0 0 14px 14px;}

/* messages */
.row{display:flex;flex-direction:column;align-items:flex-start;padding:0 10px;margin-bottom:6px;}
.row.out{align-items:flex-end;}
.row.turn{margin-top:22px;}
.row.last{margin-bottom:24px;}
.bubble{position:relative;display:flex;align-items:flex-end;gap:25px;padding:12px 21px 13px 19px;background:#252525;border-radius:22px;}
.out .bubble{padding-right:19px;background:#174c36;}
.text{color:#e2e2e2;font-weight:500;}
.text a{color:#25c268;text-decoration:underline;text-decoration-thickness:2px;text-underline-offset:3px;}
.meta{display:flex;align-items:center;gap:8px;margin-bottom:-5px;color:#9c9c9c;font-size:20px;font-weight:500;white-space:nowrap;}
.out .meta{color:#9cb5aa;}
.ticks{width:28px;height:20px;color:#53a6fb;}
.lines{gap:31px;}
.stack{display:block;padding-right:27px;padding-bottom:12px;}
.stack .meta{justify-content:flex-end;margin:-26px -6px -5px 0;}

.tail::after{content:"";position:absolute;left:-11px;bottom:0;width:24px;height:26px;background:inherit;clip-path:path("M14 0C14 12 9 19 1 24C10 25 18 24 24 21Z");}
.out .tail::after{left:auto;right:-11px;clip-path:path("M10 0C10 12 15 19 23 24C14 25 6 24 0 21Z");}

.reaction{position:relative;z-index:1;display:flex;align-items:center;justify-content:center;width:65px;height:46px;margin:-6px 0 20px 21px;background:#252525;border-radius:23px;box-shadow:0 0 0 1px #171818;}
.pray{width:34px;height:34px;fill:url(#gold);}

.unread{margin-bottom:25px;padding:9px 10px 10px;border-top:1px solid #303131;background:rgba(0,0,0,.4);color:#dcdcdc;font-size:23px;font-weight:600;line-height:31px;text-align:center;}

/* quoted reply */
.quoted{padding-top:7px;}
.quote{margin:0 -20px 12px -12px;padding:20px 18px 19px 26px;background:linear-gradient(to right,#a58fff 8px,#1e1e1e 8px);border-radius:16px;color:#b2b2b2;font-size:23px;}
.quote cite{display:block;margin-bottom:6px;color:#a58fff;font-size:24px;font-style:normal;font-weight:700;}

.big{margin-top:-18px;}
.emoji{flex-direction:column;gap:17px;padding:20px 20px 12px;}
.hands{display:flex;gap:10px;}
.light{width:69px;height:69px;fill:url(#skin);}
```
